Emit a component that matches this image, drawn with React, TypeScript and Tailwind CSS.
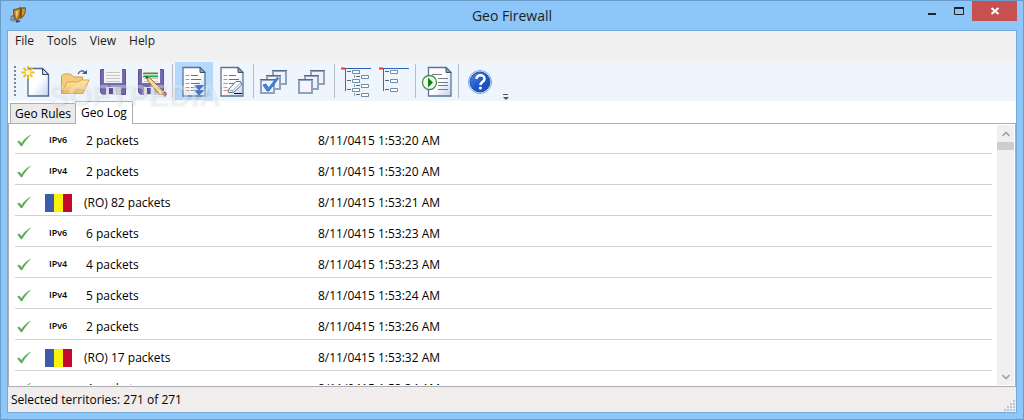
import { useState } from 'react';
import type { ReactNode } from 'react';

interface LogEntry {
  id: number;
  source: 'IPv4' | 'IPv6' | 'RO';
  packets: number;
  time: string;
}

const logEntries: LogEntry[] = [
  { id: 1, source: 'IPv6', packets: 2, time: '8/11/0415 1:53:20 AM' },
  { id: 2, source: 'IPv4', packets: 2, time: '8/11/0415 1:53:20 AM' },
  { id: 3, source: 'RO', packets: 82, time: '8/11/0415 1:53:21 AM' },
  { id: 4, source: 'IPv6', packets: 6, time: '8/11/0415 1:53:23 AM' },
  { id: 5, source: 'IPv4', packets: 4, time: '8/11/0415 1:53:23 AM' },
  { id: 6, source: 'IPv4', packets: 5, time: '8/11/0415 1:53:24 AM' },
  { id: 7, source: 'IPv6', packets: 2, time: '8/11/0415 1:53:26 AM' },
  { id: 8, source: 'RO', packets: 17, time: '8/11/0415 1:53:32 AM' },
  { id: 9, source: 'IPv4', packets: 4, time: '8/11/0415 1:53:34 AM' },
];

const menus = ['File', 'Tools', 'View', 'Help'];
const tabs = ['Geo Rules', 'Geo Log'];

function Icon({ children }: { children: ReactNode }) {
  return (
    <svg className="h-8 w-8 shrink-0" viewBox="0 0 32 32" fill="none" aria-hidden="true">
      {children}
    </svg>
  );
}

function ShieldIcon() {
  return (
    <svg className="h-4 w-4" viewBox="0 0 16 16" aria-hidden="true">
      <circle cx="3.5" cy="11.5" r="3.5" fill="#5f86a3" />
      <path d="M0 11h5M1 14h5" stroke="#a9bfae" />
      <path d="M9 1c2-1 4-1 7-.5 0 5-1 9-6 12z" fill="#8a5a14" />
      <path d="M3.500 2.500c3-.2 5-.8 7-2 .5 6-.5 10.500-3.500 13.500C4 12 3.500 7 3.500 2.500z" fill="#b97d22" stroke="#5f3a08" strokeWidth=".8" />
      <path d="M5.500 4c1-.2 2-.4 3-1 0 3-.7 6-2 8C5.500 9 5.500 7 5.500 4z" fill="#efc467" />
      <path d="M12 2c1-.4 2-.4 3-.3-.2 3-1 6-3 8z" fill="#cf9532" />
      <path d="M6 15l4-1" stroke="#1e3fbc" strokeWidth="1.500" />
    </svg>
  );
}

/* Dog-eared sheet shared by the document icons */
function Sheet() {
  return (
    <>
      <path d="M5 2.500h17l5 5V31H5z" fill="url(#paper)" stroke="#5b7593" strokeWidth="1.300" />
      <path d="M22 2.500v5h5z" fill="#8ea5c4" stroke="#3d5570" />
    </>
  );
}

function RedLines() {
  return (
    <path d="M7.500 10.500h4M7.500 14.500h4M7.500 18.500h4M7.500 22.500h4M7.500 25.500h4" stroke="#ee7f7f" />
  );
}

function NewIcon() {
  return (
    <Icon>
      <path d="M7 3.500h14.500l6 6V31H7z" fill="url(#paper)" stroke="#4c6a93" strokeWidth="1.300" />
      <path d="M21.500 3.500v6h6z" fill="#c9d9ee" stroke="#33475f" />
      <path d="M7 1v13M0.500 7.500h13M2.500 3l9 9M11.500 3l-9 9" stroke="#f2bd1d" strokeWidth="1.800" />
      <circle cx="7" cy="7.500" r="2.500" fill="#fffbd5" />
    </Icon>
  );
}

function OpenIcon() {
  return (
    <Icon>
      <path d="M2.500 28V11l2-2h7l3 3h9v5" fill="#f3cd7c" stroke="#d09c4a" />
      <path d="M2.500 28.500L8 17h11l3-2h8l-6 13.500z" fill="url(#folder)" stroke="#d9a551" />
      <path d="M19 9c2-4 5-4 7-1" stroke="#4d6d91" strokeWidth="1.500" />
      <path d="M23 9h5V5z" fill="#3f5f84" />
    </Icon>
  );
}

function Floppy() {
  return (
    <>
      <path d="M3.500 4.500h25v25H5.500l-2-2z" fill="#7468b0" stroke="#5d509b" />
      <path d="M7 4h18v14H7z" fill="#f4f4f5" />
      <path d="M9 7.500h14M9 10.500h14M9 13.500h14M9 16.500h14" stroke="#c6c6ca" />
      <path d="M9 22h15v8H9z" fill="#dddde3" />
      <path d="M12 23h4v6h-4z" fill="#56519a" />
      <path d="M19 22h5v8h-5z" fill="#bdbdc6" />
    </>
  );
}

function SaveIcon() {
  return (
    <Icon>
      <Floppy />
    </Icon>
  );
}

function SaveAsIcon() {
  return (
    <Icon>
      <Floppy />
      <path d="M8 8.500h15M8 11.500h15" stroke="#28a342" strokeWidth="1.400" />
      <path d="M11 12l4 1 14 14-4 3-12-14z" fill="#f3cf7b" stroke="#896233" strokeWidth=".8" />
      <path d="M14 15l12 13" stroke="#fff0b6" />
      <path d="M27 29l3-3 2 3-2 3z" fill="#c94949" />
      <path d="M25 29l4-4 1 1-4 4z" fill="#b9cdc4" />
      <path d="M10 11l3 1-1 2z" fill="#313131" />
    </Icon>
  );
}

function ScrollLogIcon() {
  return (
    <Icon>
      <Sheet />
      <RedLines />
      <path d="M13 10.500h7M13 14.500h10M13 18.500h9M13 22.500h4M13 25.500h4" stroke="#687078" />
      <path d="M16.500 20.500h9L21 25z" fill="#3f74dd" stroke="#2555b4" strokeWidth=".6" />
      <path d="M16.500 25.500h9L21 30z" fill="#3f74dd" stroke="#2555b4" strokeWidth=".6" />
    </Icon>
  );
}

function ClearLogIcon() {
  return (
    <Icon>
      <Sheet />
      <RedLines />
      <path d="M13 10.500h7M13 14.500h10M13 18.500h5" stroke="#687078" />
      <path d="M12 25l8-8.500h4.500l1 3.500-8 7.500h-5z" fill="#f8faff" stroke="#5f7189" />
      <path d="M12 25l5 .5 8-8M17 25.500v2" stroke="#93a4b8" />
      <path d="M18 28.500h8" stroke="#111" />
    </Icon>
  );
}

function Boxes() {
  return (
    <>
      <path d="M14 6h13v13H14z" fill="#f3effb" stroke="#8fa2bc" strokeWidth="2" />
      <path d="M13 5.500h15" stroke="#516c8c" />
      <path d="M8 11h13v13H8z" fill="#f3effb" stroke="#8fa2bc" strokeWidth="2" />
      <path d="M7 10.500h15" stroke="#516c8c" />
      <path d="M2 15h13v13H2z" fill="#f7f2ff" stroke="#8fa2bc" strokeWidth="2" />
      <path d="M1 14.500h15" stroke="#516c8c" />
    </>
  );
}

function CheckAllIcon() {
  return (
    <Icon>
      <Boxes />
      <path d="M4 20l3-1 2.500 4L18 12.500l1.500 1L10 26H8z" fill="#3f8be8" stroke="#1d62c0" strokeWidth=".8" />
    </Icon>
  );
}

function UncheckAllIcon() {
  return (
    <Icon>
      <Boxes />
    </Icon>
  );
}

function ExpandIcon() {
  return (
    <Icon>
      <path d="M1 3.500h30" stroke="#2d62b8" />
      <path d="M1 3.500h4" stroke="#e43b2d" strokeWidth="2" />
      <path d="M5.500 3v23" stroke="#53677c" />
      <path d="M7 6.500h4M7 15.500h4M7 24.500h4M16 11.500h4M16 20.500h4M16 29.500h4" stroke="#53677c" />
      <path d="M14.500 10v3M14.500 19v3M14.500 28v3" stroke="#94a1af" />
      <path d="M12.500 5.500h7v3h-7zM12.500 14.500h7v3h-7zM12.500 23.500h7v3h-7zM21.500 10.500h7v3h-7zM21.500 19.500h7v3h-7zM21.500 28.500h7v3h-7z" fill="#fff" stroke="#6d8daa" />
    </Icon>
  );
}

function CollapseIcon() {
  return (
    <Icon>
      <path d="M1 3.500h30" stroke="#2d62b8" />
      <path d="M1 3.500h4" stroke="#e43b2d" strokeWidth="2" />
      <path d="M5.500 3v23" stroke="#53677c" />
      <path d="M7 6.500h4M7 15.500h4M7 24.500h4" stroke="#53677c" />
      <path d="M12.500 5.500h7v3h-7zM12.500 14.500h7v3h-7zM12.500 23.500h7v3h-7z" fill="#fff" stroke="#6d8daa" />
    </Icon>
  );
}

function RunIcon() {
  return (
    <Icon>
      <path d="M7.500 2.500H25l5 5V31H7.500z" fill="url(#paper)" stroke="#5b7593" strokeWidth="1.300" />
      <path d="M25 2.500v5h5z" fill="#8ea5c4" stroke="#3d5570" />
      <path d="M11 9.500h10M17 13.500h10M17 17.500h10M17 20.500h10M17 24.500h10" stroke="#777d83" />
      <circle cx="8.500" cy="17.500" r="7" fill="#f5fff1" stroke="#42904a" strokeWidth="1.300" />
      <path d="M7 12.500v10l5-5z" fill="#128016" />
    </Icon>
  );
}

function HelpIcon() {
  return (
    <Icon>
      <circle cx="16" cy="17" r="11.500" fill="#f1f5ff" stroke="#7c9fdd" />
      <circle cx="16" cy="17" r="10" fill="url(#help)" stroke="#184fae" />
      <path d="M12.500 14c0-5 8-5 8 0 0 3-4 2.500-4 6" stroke="#fff" strokeWidth="2.600" />
      <circle cx="16.400" cy="23" r="1.500" fill="#fff" />
    </Icon>
  );
}

function Separator() {
  return <span className="mx-[2px] h-[34px] w-px shrink-0 bg-[#b5bcc6]" />;
}

interface ToolButtonProps {
  label: string;
  pressed?: boolean;
  children: ReactNode;
}

function ToolButton({ label, pressed, children }: ToolButtonProps) {
  return (
    <button
      type="button"
      title={label}
      aria-label={label}
      className={`flex h-[38px] w-[38px] items-center justify-center ${
        pressed ? 'bg-[#b5d9fd]' : 'hover:bg-[#d5e8fb]'
      }`}
    >
      {children}
    </button>
  );
}

function RomaniaFlag() {
  return (
    <svg className="h-[18px] w-[27px]" viewBox="0 0 27 18" aria-hidden="true">
      <path d="M0 0h9v18H0z" fill="#3d5bab" />
      <path d="M9 0h9v18H9z" fill="#f9f20b" />
      <path d="M18 0h9v18h-9z" fill="#c3092c" />
    </svg>
  );
}

function AllowedIcon() {
  return (
    <svg className="h-4 w-4" viewBox="0 0 16 16" aria-hidden="true">
      <path d="M1.500 8.500l2-.5 2 2.500C7.500 7 10.500 4 14.500 2 11 5.500 8 9.500 6 13H5z" fill="#58a951" stroke="#58a951" strokeWidth=".4" />
    </svg>
  );
}

export default function App() {
  const [activeTab, setActiveTab] = useState('Geo Log');

  return (
    <div className="flex h-screen flex-col border border-[#6b9cc9] bg-[#8dc7fa] px-[6px] pb-[6px] font-['Open_Sans','Noto_Sans',sans-serif] text-xs text-black">
      <svg className="absolute h-0 w-0" aria-hidden="true">
        <defs>
          <linearGradient id="paper" x1="0" y1="0" x2="1" y2="1">
            <stop offset=".5" stopColor="#fff" />
            <stop offset="1" stopColor="#c3d3ef" />
          </linearGradient>
          <linearGradient id="folder" x1="0" y1="0" x2="0" y2="1">
            <stop stopColor="#ffe9a6" />
            <stop offset="1" stopColor="#f0bd62" />
          </linearGradient>
          <linearGradient id="help" x1="0" y1="0" x2="1" y2="1">
            <stop stopColor="#568de9" />
            <stop offset=".5" stopColor="#2059c5" />
            <stop offset="1" stopColor="#174baf" />
          </linearGradient>
        </defs>
      </svg>

      <header className="grid h-[29px] shrink-0 grid-cols-[1fr_auto_1fr] items-start">
        <div className="pt-[6px] pl-[3px]">
          <ShieldIcon />
        </div>
        <h1 className="text-sm leading-[30px] text-[#202020]">Geo Firewall</h1>
        <div className="flex justify-end">
          <button type="button" aria-label="Minimize" className="flex h-5 w-7 items-center justify-center">
            <svg className="h-3 w-3" viewBox="0 0 12 12">
              <path d="M2 8h8v2H2z" fill="#222" />
            </svg>
          </button>
          <button type="button" aria-label="Maximize" className="flex h-5 w-[26px] items-center justify-center">
            <svg className="h-3 w-3" viewBox="0 0 12 12" fill="none">
              <path d="M1.500 3v6.500h9V3" stroke="#222" />
              <path d="M1 3h10" stroke="#222" strokeWidth="2" />
            </svg>
          </button>
          <button type="button" aria-label="Close" className="flex h-5 w-[45px] items-center justify-center bg-[#c75050]">
            <svg className="h-3 w-3" viewBox="0 0 12 12">
              <path d="M2.500 3l7 6M9.500 3l-7 6" stroke="#fff" strokeWidth="2" />
            </svg>
          </button>
        </div>
      </header>

      <main className="flex min-h-0 flex-1 flex-col border border-[#74a9da] bg-white">
        <nav className="flex h-[30px] shrink-0 items-start gap-[13px] bg-[#f0f0f0] px-[7px] text-[#202020]">
          {menus.map((menu) => (
            <button key={menu} type="button" className="leading-5">
              {menu}
            </button>
          ))}
        </nav>

        <div className="relative flex h-10 shrink-0 items-center bg-[#eef5fd] pl-[6px]">
          <span className="mr-[2px] h-[30px] border-l-2 border-dotted border-[#7e858e]" />
          <ToolButton label="New">
            <NewIcon />
          </ToolButton>
          <ToolButton label="Open">
            <OpenIcon />
          </ToolButton>
          <ToolButton label="Save">
            <SaveIcon />
          </ToolButton>
          <ToolButton label="Save as">
            <SaveAsIcon />
          </ToolButton>
          <Separator />
          <ToolButton label="Scroll log" pressed>
            <ScrollLogIcon />
          </ToolButton>
          <ToolButton label="Clear log">
            <ClearLogIcon />
          </ToolButton>
          <Separator />
          <ToolButton label="Check all">
            <CheckAllIcon />
          </ToolButton>
          <ToolButton label="Uncheck all">
            <UncheckAllIcon />
          </ToolButton>
          <Separator />
          <ToolButton label="Expand all">
            <ExpandIcon />
          </ToolButton>
          <ToolButton label="Collapse all">
            <CollapseIcon />
          </ToolButton>
          <Separator />
          <ToolButton label="Run">
            <RunIcon />
          </ToolButton>
          <Separator />
          <ToolButton label="Help">
            <HelpIcon />
          </ToolButton>
          <button type="button" aria-label="Toolbar options" className="flex h-full w-3 items-end">
            <svg className="h-3 w-3" viewBox="0 0 12 12">
              <path d="M4 5h5v1H4zM4 8h6l-3 3z" fill="#555" />
            </svg>
          </button>
          <span className="pointer-events-none absolute top-[18px] left-10 z-10 flex items-start font-['Liberation_Sans',sans-serif] text-[30px] leading-8 font-bold text-white/35 [text-shadow:1px_1px_2px_rgb(90_100_120/0.15)]">
            SOFTPEDIA
            <span className="text-[10px] leading-3 font-normal">®</span>
          </span>
        </div>

        <div role="tablist" className="flex h-[22px] shrink-0 items-end pl-[2px]">
          {tabs.map((tab) => (
            <button
              key={tab}
              type="button"
              role="tab"
              aria-selected={activeTab === tab}
              onClick={() => setActiveTab(tab)}
              className={
                activeTab === tab
                  ? 'relative -mb-px h-[23px] border border-b-0 border-[#acacac] bg-white px-[5px] pb-px'
                  : 'h-5 border border-r-0 border-b-0 border-[#acacac] bg-[#ebebeb] px-1'
              }
            >
              {tab}
            </button>
          ))}
        </div>

        <section className="flex min-h-0 flex-1 border border-[#abadb3] pb-px">
          <div className="min-w-0 flex-1 overflow-hidden pr-[5px] pl-[6px]">
            <table className="w-full table-fixed border-separate border-spacing-0">
              <colgroup>
                <col className="w-[30px]" />
                <col className="w-[39px]" />
                <col className="w-[234px]" />
                <col />
              </colgroup>
              <tbody>
                {logEntries.map((entry) => (
                  <tr key={entry.id} className="h-[31px] align-bottom leading-6 first:h-[30px]">
                    <td className="border-b border-[#d0d0d0] p-0">
                      <div className="flex h-6 items-center pl-px">
                        <AllowedIcon />
                      </div>
                    </td>
                    <td className="border-b border-[#d0d0d0] p-0">
                      <div className="flex h-6 items-center">
                        {entry.source === 'RO' ? (
                          <RomaniaFlag />
                        ) : (
                          <span className="pb-[3px] pl-1 text-[9px] leading-3 font-semibold">{entry.source}</span>
                        )}
                      </div>
                    </td>
                    <td className={`border-b border-[#d0d0d0] py-0 ${entry.source === 'RO' ? '' : 'pl-[2px]'}`}>
                      {entry.source === 'RO' && '(RO) '}
                      {entry.packets} packets
                    </td>
                    <td className="border-b border-[#d0d0d0] p-0">{entry.time}</td>
                  </tr>
                ))}
              </tbody>
            </table>
          </div>
          <div className="mt-px mr-px flex w-[17px] shrink-0 flex-col items-center bg-[#f0f0f0]">
            <button type="button" aria-label="Scroll up" className="flex h-[17px] w-full items-center justify-center">
              <svg className="h-2 w-2" viewBox="0 0 8 8" fill="none">
                <path d="M.5 6L4 2.500 7.500 6" stroke="#a3a3a3" strokeWidth="1.600" />
              </svg>
            </button>
            <div className="h-2 w-full bg-[#cdcdcd]" />
            <button type="button" aria-label="Scroll down" className="mt-auto flex h-[17px] w-full items-center justify-center">
              <svg className="h-2 w-2" viewBox="0 0 8 8" fill="none">
                <path d="M.5 2L4 5.500 7.500 2" stroke="#a3a3a3" strokeWidth="1.600" />
              </svg>
            </button>
          </div>
        </section>

        <footer className="flex h-[25px] shrink-0 items-end justify-between bg-[#f0edec] pl-[3px]">
          <span className="leading-[25px]">Selected territories: 271 of 271</span>
          <svg className="h-3 w-3" viewBox="0 0 12 12" aria-hidden="true">
            <path d="M9 0h2v2H9zM9 3h2v2H9zM6 3h2v2H6zM9 6h2v2H9zM6 6h2v2H6zM3 6h2v2H3zM9 9h2v2H9zM6 9h2v2H6zM3 9h2v2H3zM0 9h2v2H0z" fill="#bdc5d0" />
          </svg>
        </footer>
      </main>
    </div>
  );
}
